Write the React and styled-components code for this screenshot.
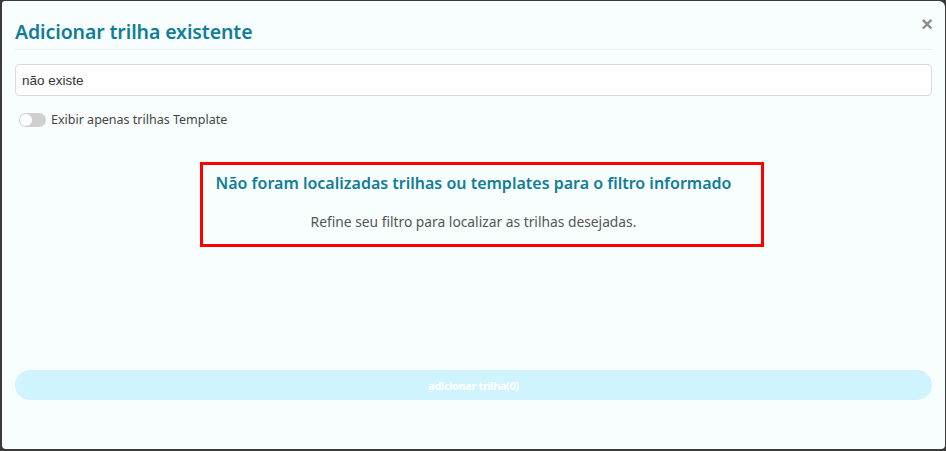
import styled, { createGlobalStyle } from 'styled-components';

const GlobalStyle = createGlobalStyle`
  html, body {
    margin: 0;
    padding: 0;
    background: #3a3a3a;
  }
  body {
    font-family: "Noto Sans", "Open Sans", sans-serif;
  }
`;

const Page = styled.div`
  width: 946px;
  height: 451px;
  padding: 1px 1px 2px 2px;
  box-sizing: border-box;
`;

const Modal = styled.div`
  height: 100%;
  background: #f8fdfe;
  border-radius: 3px 6px 4px 4px;
  padding: 0 13px 0 13px;
  box-sizing: border-box;
  display: flex;
  flex-direction: column;
`;

const Header = styled.div`
  display: flex;
  align-items: center;
  justify-content: space-between;
  height: 49px;
  border-bottom: 1px solid #e5eef0;
  box-sizing: border-box;
`;

const Title = styled.h2`
  margin: 12px 0 0 0;
  font-size: 19.5px;
  font-weight: 600;
  color: #117e97;
  letter-spacing: -0.1px;
`;

const Close = styled.button`
  border: none;
  background: none;
  padding: 0;
  margin: -2px -1px 0 0;
  color: #8a8a8a;
  font-size: 20px;
  font-weight: 700;
  font-family: "Liberation Sans", sans-serif;
  line-height: 1;
  cursor: pointer;
`;

const SearchInput = styled.input`
  margin-top: 14px;
  height: 32px;
  border: 1px solid #d8dcdd;
  border-radius: 4px;
  background: #fff;
  padding: 0 6px;
  font-family: "Liberation Sans", Arial, sans-serif;
  font-size: 13.5px;
  color: #333;
  box-sizing: border-box;
  outline: none;
`;

const ToggleRow = styled.label`
  display: flex;
  align-items: center;
  gap: 5px;
  margin-top: 15px;
  padding-left: 4px;
  font-size: 12.5px;
  color: #454545;
`;

const Track = styled.span`
  width: 27px;
  height: 14px;
  border-radius: 7px;
  background: #cfcfcf;
  position: relative;
  display: inline-block;
`;

const Knob = styled.span`
  position: absolute;
  top: 1px;
  left: 1px;
  width: 12px;
  height: 12px;
  border-radius: 50%;
  background: #fff;
`;

const EmptyBox = styled.div`
  margin: 34px 0 0 185px;
  width: 564px;
  height: 85px;
  border: 3px solid #ff0000;
  box-sizing: border-box;
  padding: 7px 17px 0 0;
  display: flex;
  flex-direction: column;
  align-items: center;
`;

const EmptyTitle = styled.div`
  font-size: 16px;
  font-weight: 600;
  color: #117e97;
`;

const EmptyText = styled.div`
  margin-top: 18px;
  font-size: 13.8px;
  color: #555;
`;

const Spacer = styled.div`
  flex: 1;
`;

const SubmitButton = styled.button`
  height: 30px;
  margin-bottom: 49px;
  border: none;
  border-radius: 15px;
  background: #cff4fd;
  color: #fff;
  font-family: "Noto Sans", sans-serif;
  font-size: 11px;
  font-weight: 700;
  letter-spacing: -0.4px;
`;

export default function App() {
  return (
    <>
      <GlobalStyle />
      <Page>
        <Modal>
          <Header>
            <Title>Adicionar trilha existente</Title>
            <Close>×</Close>
          </Header>
          <SearchInput defaultValue="não existe" />
          <ToggleRow>
            <Track>
              <Knob />
            </Track>
            Exibir apenas trilhas Template
          </ToggleRow>
          <EmptyBox>
            <EmptyTitle>Não foram localizadas trilhas ou templates para o filtro informado</EmptyTitle>
            <EmptyText>Refine seu filtro para localizar as trilhas desejadas.</EmptyText>
          </EmptyBox>
          <Spacer />
          <SubmitButton disabled>adicionar trilha(0)</SubmitButton>
        </Modal>
      </Page>
    </>
  );
}
